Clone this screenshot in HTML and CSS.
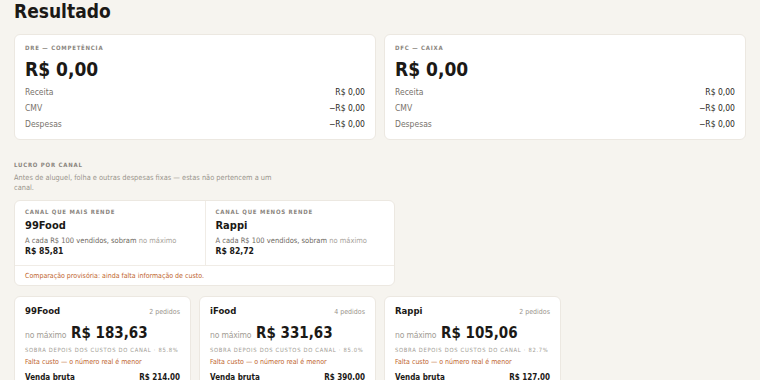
FILE: index.html
```html
<!DOCTYPE html>
<html lang="pt-BR">
<head>
  <meta charset="UTF-8">
  <meta name="viewport" content="width=device-width, initial-scale=1.0">
  <title>Resultado</title>
  <link rel="stylesheet" href="styles.css">
</head>
<body>
  <div class="page">
    <h1>Resultado</h1>

    <div class="summary">
      <div class="card">
        <div class="label">DRE — Competência</div>
        <div class="big">R$ 0,00</div>
        <div class="row"><span>Receita</span><span class="val">R$ 0,00</span></div>
        <div class="row"><span>CMV</span><span class="val">−R$ 0,00</span></div>
        <div class="row"><span>Despesas</span><span class="val">−R$ 0,00</span></div>
      </div>
      <div class="card">
        <div class="label">DFC — Caixa</div>
        <div class="big">R$ 0,00</div>
        <div class="row"><span>Receita</span><span class="val">R$ 0,00</span></div>
        <div class="row"><span>CMV</span><span class="val">−R$ 0,00</span></div>
        <div class="row"><span>Despesas</span><span class="val">−R$ 0,00</span></div>
      </div>
    </div>

    <div class="section">
      <div class="label">Lucro por canal</div>
      <p class="hint">Antes de aluguel, folha e outras despesas fixas — estas não pertencem a um canal.</p>
    </div>

    <div class="compare">
      <div class="compare-cols">
        <div class="compare-col">
          <div class="label">Canal que mais rende</div>
          <div class="compare-name">99Food</div>
          <div class="compare-text">A cada R$ 100 vendidos, sobram <span class="muted">no máximo</span></div>
          <div class="compare-value">R$ 85,81</div>
        </div>
        <div class="compare-col">
          <div class="label">Canal que menos rende</div>
          <div class="compare-name">Rappi</div>
          <div class="compare-text">A cada R$ 100 vendidos, sobram <span class="muted">no máximo</span></div>
          <div class="compare-value">R$ 82,72</div>
        </div>
      </div>
      <div class="compare-foot">Comparação provisória: ainda falta informação de custo.</div>
    </div>

    <div class="channels">
      <div class="card channel">
        <div class="channel-head"><span class="channel-name">99Food</span><span class="orders">2 pedidos</span></div>
        <div class="channel-total"><span class="max">no máximo</span> R$ 183,63</div>
        <div class="share">Sobra depois dos custos do canal · 85.8%</div>
        <div class="warn">Falta custo — o número real é menor</div>
        <div class="line"><span>Venda bruta</span><span>R$ 214,00</span></div>
      </div>
      <div class="card channel">
        <div class="channel-head"><span class="channel-name">iFood</span><span class="orders">4 pedidos</span></div>
        <div class="channel-total"><span class="max">no máximo</span> R$ 331,63</div>
        <div class="share">Sobra depois dos custos do canal · 85.0%</div>
        <div class="warn">Falta custo — o número real é menor</div>
        <div class="line"><span>Venda bruta</span><span>R$ 390,00</span></div>
      </div>
      <div class="card channel">
        <div class="channel-head"><span class="channel-name">Rappi</span><span class="orders">2 pedidos</span></div>
        <div class="channel-total"><span class="max">no máximo</span> R$ 105,06</div>
        <div class="share">Sobra depois dos custos do canal · 82.7%</div>
        <div class="warn">Falta custo — o número real é menor</div>
        <div class="line"><span>Venda bruta</span><span>R$ 127,00</span></div>
      </div>
    </div>
  </div>
</body>
</html>
```

FILE: styles.css
```css
body {
  margin: 0;
  background-color: #f6f4ef;
  color: #1b1916;
  font-family: "DejaVu Sans Condensed", "DejaVu Sans", sans-serif;
}

.page {
  padding: 0 14px;
}

h1 {
  margin: 0 0 12px;
  font-size: 19px;
  line-height: 22px;
}

.card {
  background: #fff;
  border: 1px solid #ece8e1;
  border-radius: 6px;
}

.summary {
  display: grid;
  grid-template-columns: 1fr 1fr;
  gap: 8px;
}

.summary .card {
  padding: 8px 10px 7px;
}

.label {
  font-size: 6px;
  font-weight: bold;
  letter-spacing: 0.13em;
  text-transform: uppercase;
  color: #8a857e;
  line-height: 10px;
}

.big {
  font-size: 19px;
  font-weight: bold;
  line-height: 24px;
  margin: 4px 0 3px;
}

.row {
  display: flex;
  justify-content: space-between;
  font-size: 8.5px;
  line-height: 16px;
  color: #77726b;
}

.row .val {
  color: #2a2723;
}

.section {
  margin-top: 20px;
}

.hint {
  margin: 3px 0 7px;
  max-width: 270px;
  font-size: 7.4px;
  line-height: 10px;
  color: #9a958d;
}

.compare {
  width: 379px;
  background: #fff;
  border: 1px solid #ece8e1;
  border-radius: 6px;
}

.compare-cols {
  display: grid;
  grid-template-columns: 1fr 1fr;
}

.compare-col {
  padding: 6px 10px 8px;
}

.compare-col + .compare-col {
  border-left: 1px solid #f0ece6;
}

.compare-name {
  font-size: 11px;
  font-weight: bold;
  line-height: 14px;
  margin-top: 2px;
}

.compare-text {
  font-size: 7.5px;
  line-height: 10px;
  color: #6f6a63;
  margin-top: 3px;
}

.muted {
  color: #a9a49c;
}

.compare-value {
  font-size: 8.6px;
  font-weight: bold;
  line-height: 11px;
}

.compare-foot {
  border-top: 1px solid #f0ece6;
  padding: 6px 10px 4px;
  font-size: 7px;
  line-height: 9px;
  color: #c0652e;
}

.channels {
  display: grid;
  grid-template-columns: repeat(4, 1fr);
  gap: 8px;
  margin-top: 10px;
}

.channel {
  padding: 8px 10px 10px;
}

.channel-head {
  display: flex;
  justify-content: space-between;
  align-items: baseline;
  line-height: 12px;
}

.channel-name {
  font-size: 9.5px;
  font-weight: bold;
}

.orders {
  font-size: 7px;
  color: #9a958d;
}

.channel-total {
  margin-top: 5px;
  font-size: 15px;
  font-weight: bold;
  line-height: 20px;
}

.max {
  font-size: 8.5px;
  font-weight: normal;
  color: #a29d95;
  letter-spacing: -0.02em;
}

.share {
  margin-top: 1px;
  font-size: 5.8px;
  line-height: 9px;
  letter-spacing: 0.12em;
  text-transform: uppercase;
  color: #a29d95;
}

.warn {
  margin-top: 1px;
  font-size: 7px;
  line-height: 12px;
  color: #c0652e;
}

.line {
  display: flex;
  justify-content: space-between;
  margin-top: 4px;
  font-size: 8px;
  line-height: 12px;
  font-weight: bold;
}
```
